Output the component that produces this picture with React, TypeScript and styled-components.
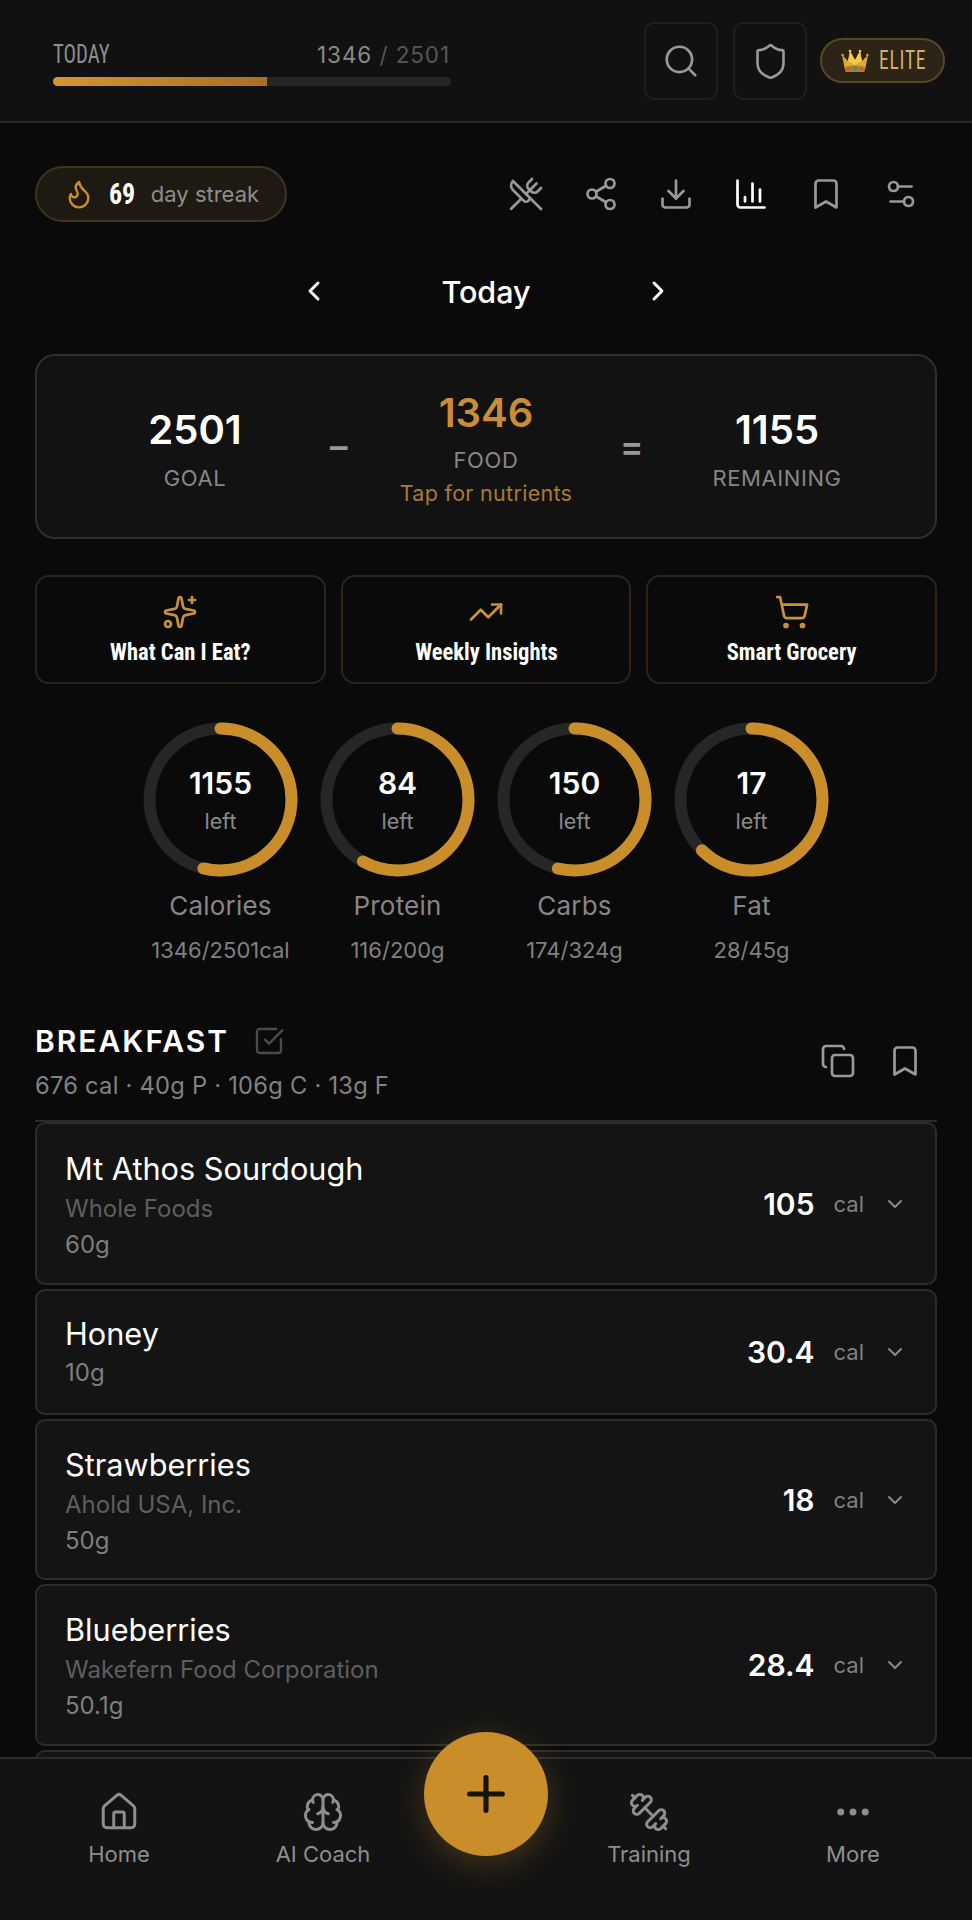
import React from "react";
import styled, { createGlobalStyle } from "styled-components";
import {
  Search, Shield, UtensilsCrossed, Share2, Download, ChartColumn, Bookmark, Settings2, Flame,
  ChevronLeft, ChevronRight, ChevronDown, Sparkles, TrendingUp, ShoppingCart, SquareCheckBig, Copy,
  House, Brain, Dumbbell, Ellipsis, Plus,
} from "lucide-react";

const GOLD = "#c98d2a";
const SANS = `Inter, "Liberation Sans", sans-serif`;
const NARROW = `"Liberation Sans Narrow", "Roboto Condensed", "DejaVu Sans Condensed", sans-serif`;

const Global = createGlobalStyle`
  html, body { margin: 0; padding: 0; background: #0a0a0a; }
  * { box-sizing: border-box; }
`;

const Screen = styled.div`
  position: relative; width: 972px; height: 1920px; overflow: hidden;
  background: #0a0a0a; color: #fff; font-family: ${SANS};
`;
const Header = styled.header`
  height: 123px; background: #111111; border-bottom: 2px solid #2a2a2a;
  display: flex; align-items: flex-start; padding: 22px 27px 0 53px;
`;
const Progress = styled.div`width: 398px; padding-top: 18px; margin-right: 193px;`;
const ProgressTop = styled.div`display: flex; justify-content: space-between; align-items: center; height: 28px;`;
const TodayLabel = styled.span`
  display: inline-block; font: 400 26px ${NARROW}; color: #8f8f8f; transform: scaleX(0.8); transform-origin: left center;
`;
const Counts = styled.span`font-size: 22.5px; color: #8a8a8a; letter-spacing: 0.9px; margin-right: 1px;`;
const CountsGoal = styled.span`color: #565656;`;
const Track = styled.div`height: 9px; margin-top: 9px; border-radius: 5px; background: #262626; overflow: hidden;`;
const Fill = styled.div`height: 100%; background: linear-gradient(90deg, #d4962f, #a96f24);`;
const SquareBtn = styled.div`
  width: 74px; height: 78px; margin-right: 15px; flex: none; border: 2px solid #1f1f1f; border-radius: 10px;
  display: flex; align-items: center; justify-content: center; color: #999;
`;
const Elite = styled.div`
  margin: 16px 0 0 -2px; width: 125px; height: 45px; flex: none; border-radius: 23px;
  background: #2c2416; border: 2px solid #57462a; display: flex; align-items: center; padding-left: 19px;
`;
const EliteText = styled.span`
  display: inline-block; margin-left: 10px; font: 400 25px ${NARROW}; color: #d6ad66; letter-spacing: 1px;
  transform: scaleX(0.78); transform-origin: left center;
`;

const Body = styled.main`padding: 43px 35px 0;`;
const StreakRow = styled.div`display: flex; justify-content: space-between; align-items: center; height: 56px;`;
const Streak = styled.div`
  width: 252px; height: 56px; border-radius: 28px; background: #1e1a12; border: 2px solid #40341f;
  display: flex; align-items: center; padding-left: 26px; color: ${GOLD};
`;
const StreakNum = styled.span`
  display: inline-block; font: 700 29.5px ${NARROW}; color: #fff; margin-left: 14px;
  transform: scaleX(0.88); transform-origin: left center;
`;
const StreakText = styled.span`font-size: 22px; color: #8d8d8d; margin-left: 12px;`;
const Tools = styled.div`display: flex; gap: 39px; margin-right: 18px;`;
const Tool = styled.span<{ $on?: boolean }>`display: flex; color: ${(p) => (p.$on ? "#fff" : "#999")};`;

const DateNav = styled.div`
  display: flex; align-items: center; justify-content: center; height: 40px; margin-top: 49px; color: #fff;
`;
const DateLabel = styled.span`width: 312px; text-align: center; font-size: 30.5px; font-weight: 500;`;

const Summary = styled.section`
  margin-top: 43px; height: 185px; border-radius: 20px; border: 2px solid #2e2e2e; background: #121212;
  display: grid; grid-template-columns: 316px 1fr 316px; position: relative;
`;
const Cell = styled.div`display: flex; flex-direction: column; align-items: center;`;
const SumNum = styled.div<{ $gold?: boolean; $top: number }>`
  font-size: 40px; font-weight: 600; line-height: 48px; margin-top: ${(p) => p.$top}px;
  color: ${(p) => (p.$gold ? "#c98d36" : "#fff")};
`;
const SumLabel = styled.div<{ $gap: number }>`font-size: 22px; line-height: 28px; color: #868686; letter-spacing: 0.6px; margin-top: ${(p) => p.$gap}px;`;
const Tap = styled.div`font-size: 21.5px; line-height: 28px; margin-top: 5px; color: #a87a36; letter-spacing: 0.3px;`;
const Op = styled.span<{ $left: number }>`
  position: absolute; left: ${(p) => p.$left}px; top: 71px; font-size: 35px; font-weight: 600; line-height: 38px; color: #999;
`;

const Actions = styled.section`display: grid; grid-template-columns: repeat(3, 1fr); gap: 15px; margin-top: 36px;`;
const Action = styled.div`
  height: 109px; border: 2px solid #2a2419; border-radius: 14px; display: flex; flex-direction: column; align-items: center;
  padding-top: 17px; color: #c9923a;
`;
const ActionText = styled.span`
  display: inline-block; font: 700 24.5px ${NARROW}; color: #fff; margin-top: 7px; line-height: 30px;
  transform: scaleX(0.92);
`;

const Rings = styled.section`display: flex; justify-content: center; margin-top: 38px;`;
const RingCol = styled.div`width: 177px; display: flex; flex-direction: column; align-items: center;`;
const RingBox = styled.div`position: relative; width: 155px; height: 155px;`;
const RingCentre = styled.div`
  position: absolute; inset: 0; display: flex; flex-direction: column; align-items: center; padding-top: 43px;
`;
const RingValue = styled.span`font-size: 30px; font-weight: 600; line-height: 36px;`;
const RingLeft = styled.span`font-size: 21.5px; line-height: 30px; color: #8a8a8a; margin-top: 5px;`;
const RingName = styled.span`font-size: 26px; line-height: 34px; color: #868686; margin-top: 12px; letter-spacing: 0.2px;`;
const RingSub = styled.span`font-size: 22px; line-height: 28px; color: #808080; margin-top: 13px;`;

const MealHead = styled.section`display: flex; justify-content: space-between; margin-top: 59px; height: 96px;`;
const MealTitleRow = styled.div`display: flex; align-items: center; gap: 24px; height: 36px;`;
const MealTitle = styled.span`font-size: 30px; font-weight: 600; letter-spacing: 2px; line-height: 36px;`;
const MealSub = styled.div`font-size: 23.7px; line-height: 32px; color: #828282; margin-top: 11px; letter-spacing: 0.25px;`;
const MealTools = styled.div`display: flex; gap: 31px; color: #999; padding: 20px 14px 0 0;`;

const List = styled.section`display: flex; flex-direction: column; gap: 4px; border-top: 2px solid #2a2a2a; margin-top: 1px;`;
const Card = styled.article<{ $h: number }>`
  height: ${(p) => p.$h}px; border: 2px solid #2c2c2c; border-radius: 10px; background: #141414; flex: none;
  display: flex; justify-content: space-between; align-items: center; padding: 0 28px 0 28px;
`;
const CardInfo = styled.div<{ $short?: boolean }>`
  display: flex; flex-direction: column; margin-top: ${(p) => (p.$short ? 1 : 5)}px;
`;
const FoodName = styled.span`font-size: 30.7px; line-height: 38px; color: #fff;`;
const Brand = styled.span`font-size: 24px; line-height: 36px; color: #5e5e5e; margin-top: 3px;`;
const Amount = styled.span<{ $short?: boolean }>`
  font-size: 24px; line-height: 36px; color: #7e7e7e; margin-top: ${(p) => (p.$short ? 2 : 0)}px;
`;
const CardRight = styled.div`display: flex; align-items: center; color: #8a8a8a;`;
const Cal = styled.span`font-size: 30px; font-weight: 600; color: #fff;`;
const CalUnit = styled.span`font-size: 22px; margin: 0 19px; color: #818181;`;

const Nav = styled.nav`
  position: absolute; left: 0; right: 0; bottom: 0; height: 163px; background: #131313; border-top: 2px solid #2c2c2c;
  display: grid; grid-template-columns: 238px 170px 156px 170px 238px;
`;
const NavItem = styled.div`display: flex; flex-direction: column; align-items: center; padding-top: 32px; color: #8e8e8e;`;
const NavLabel = styled.span`font-size: 22px; line-height: 30px; margin-top: 6px;`;
const MirroredDumbbell = styled(Dumbbell)`transform: scaleX(-1);`;
const Fab = styled.div`
  position: absolute; left: 424px; bottom: 64px; width: 124px; height: 124px; border-radius: 50%; background: #c98d2a;
  display: flex; align-items: center; justify-content: center; color: #17120a;
  box-shadow: 0 8px 34px rgba(201, 141, 42, 0.28);
`;

const Crown = () => (
  <svg width="28" height="24" viewBox="0 0 28 24" aria-hidden="true">
    <path d="M1 6l6 6 2-10 5 9 5-9 2 10 6-6-3 15H4z" fill="#e0aa2c" />
    <path d="M9 2l5 9 5-9 2 10-7 4-7-4z" fill="#f2c84a" />
    <path d="M4 18c6-2 14-2 20 0l-.6 5H4.6z" fill="#b67b2c" />
    <circle cx="14" cy="19.5" r="2.2" fill="#3a9a5c" />
    <circle cx="7.5" cy="20" r="1.6" fill="#c8574a" />
    <circle cx="20.5" cy="20" r="1.6" fill="#c8574a" />
    <circle cx="1.6" cy="6" r="1.2" fill="#e0aa2c" />
    <circle cx="9" cy="2" r="1.3" fill="#f2c84a" />
    <circle cx="19" cy="2" r="1.3" fill="#f2c84a" />
    <circle cx="26.4" cy="6" r="1.2" fill="#e0aa2c" />
  </svg>
);

const Ring = ({ pct }: { pct: number }) => {
  const r = 71;
  const c = 2 * Math.PI * r;
  return (
    <svg width="155" height="155" viewBox="0 0 155 155" aria-hidden="true">
      <circle cx="77.5" cy="77.5" r={r} fill="none" stroke="#262626" strokeWidth="12" />
      <circle
        cx="77.5" cy="77.5" r={r} fill="none" stroke="#c98d2a" strokeWidth="12" strokeLinecap="round"
        strokeDasharray={`${(c * pct) / 100} ${c}`} transform="rotate(-90 77.5 77.5)"
      />
    </svg>
  );
};

const macros = [
  { value: "1155", name: "Calories", sub: "1346/2501cal", pct: 53.8 },
  { value: "84", name: "Protein", sub: "116/200g", pct: 58 },
  { value: "150", name: "Carbs", sub: "174/324g", pct: 53.7 },
  { value: "17", name: "Fat", sub: "28/45g", pct: 62.2 },
];
const foods = [
  { name: "Mt Athos Sourdough", brand: "Whole Foods", amount: "60g", cal: "105", h: 163 },
  { name: "Honey", amount: "10g", cal: "30.4", h: 126 },
  { name: "Strawberries", brand: "Ahold USA, Inc.", amount: "50g", cal: "18", h: 161 },
  { name: "Blueberries", brand: "Wakefern Food Corporation", amount: "50.1g", cal: "28.4", h: 162 },
];

export default function App() {
  return (
    <Screen>
      <Global />
      <Header>
        <Progress>
          <ProgressTop>
            <TodayLabel>TODAY</TodayLabel>
            <Counts>1346 <CountsGoal>/ 2501</CountsGoal></Counts>
          </ProgressTop>
          <Track><Fill style={{ width: `${(1346 / 2501) * 100}%` }} /></Track>
        </Progress>
        <SquareBtn><Search size={38} strokeWidth={1.7} /></SquareBtn>
        <SquareBtn><Shield size={39} strokeWidth={1.6} /></SquareBtn>
        <Elite><Crown /><EliteText>ELITE</EliteText></Elite>
      </Header>
      <Body>
        <StreakRow>
          <Streak>
            <Flame size={32} strokeWidth={1.8} />
            <StreakNum>69</StreakNum>
            <StreakText>day streak</StreakText>
          </Streak>
          <Tools>
            <Tool><UtensilsCrossed size={36} strokeWidth={1.8} /></Tool>
            <Tool><Share2 size={36} strokeWidth={1.8} /></Tool>
            <Tool><Download size={36} strokeWidth={1.8} /></Tool>
            <Tool $on><ChartColumn size={36} strokeWidth={1.8} /></Tool>
            <Tool><Bookmark size={36} strokeWidth={1.8} /></Tool>
            <Tool><Settings2 size={36} strokeWidth={1.8} /></Tool>
          </Tools>
        </StreakRow>
        <DateNav>
          <ChevronLeft size={32} strokeWidth={2.2} />
          <DateLabel>Today</DateLabel>
          <ChevronRight size={32} strokeWidth={2.2} />
        </DateNav>
        <Summary>
          <Cell>
            <SumNum $top={50}>2501</SumNum>
            <SumLabel $gap={10}>GOAL</SumLabel>
          </Cell>
          <Cell>
            <SumNum $gold $top={33}>1346</SumNum>
            <SumLabel $gap={9}>FOOD</SumLabel>
            <Tap>Tap for nutrients</Tap>
          </Cell>
          <Cell>
            <SumNum $top={50}>1155</SumNum>
            <SumLabel $gap={10}>REMAINING</SumLabel>
          </Cell>
          <Op $left={293}>–</Op>
          <Op $left={583}>=</Op>
        </Summary>
        <Actions>
          <Action><Sparkles size={36} strokeWidth={1.8} /><ActionText>What Can I Eat?</ActionText></Action>
          <Action><TrendingUp size={36} strokeWidth={1.8} /><ActionText>Weekly Insights</ActionText></Action>
          <Action><ShoppingCart size={36} strokeWidth={1.8} /><ActionText>Smart Grocery</ActionText></Action>
        </Actions>
        <Rings>
          {macros.map((m) => (
            <RingCol key={m.name}>
              <RingBox>
                <Ring pct={m.pct} />
                <RingCentre>
                  <RingValue>{m.value}</RingValue>
                  <RingLeft>left</RingLeft>
                </RingCentre>
              </RingBox>
              <RingName>{m.name}</RingName>
              <RingSub>{m.sub}</RingSub>
            </RingCol>
          ))}
        </Rings>
        <MealHead>
          <div>
            <MealTitleRow>
              <MealTitle>BREAKFAST</MealTitle>
              <SquareCheckBig size={32} strokeWidth={1.8} color="#4a4a4a" />
            </MealTitleRow>
            <MealSub>676 cal · 40g P · 106g C · 13g F</MealSub>
          </div>
          <MealTools>
            <Copy size={36} strokeWidth={1.8} />
            <Bookmark size={36} strokeWidth={1.8} />
          </MealTools>
        </MealHead>
        <List>
          {foods.map((f) => (
            <Card key={f.name} $h={f.h}>
              <CardInfo $short={!f.brand}>
                <FoodName>{f.name}</FoodName>
                {f.brand && <Brand>{f.brand}</Brand>}
                <Amount $short={!f.brand}>{f.amount}</Amount>
              </CardInfo>
              <CardRight>
                <Cal>{f.cal}</Cal>
                <CalUnit>cal</CalUnit>
                <ChevronDown size={24} strokeWidth={2} />
              </CardRight>
            </Card>
          ))}
          <Card $h={126} />
        </List>
      </Body>
      <Nav>
        <NavItem><House size={42} strokeWidth={1.7} /><NavLabel>Home</NavLabel></NavItem>
        <NavItem><Brain size={42} strokeWidth={1.7} /><NavLabel>AI Coach</NavLabel></NavItem>
        <div />
        <NavItem><MirroredDumbbell size={42} strokeWidth={1.7} /><NavLabel>Training</NavLabel></NavItem>
        <NavItem><Ellipsis size={42} strokeWidth={2} /><NavLabel>More</NavLabel></NavItem>
      </Nav>
      <Fab><Plus size={56} strokeWidth={2.2} /></Fab>
    </Screen>
  );
}
